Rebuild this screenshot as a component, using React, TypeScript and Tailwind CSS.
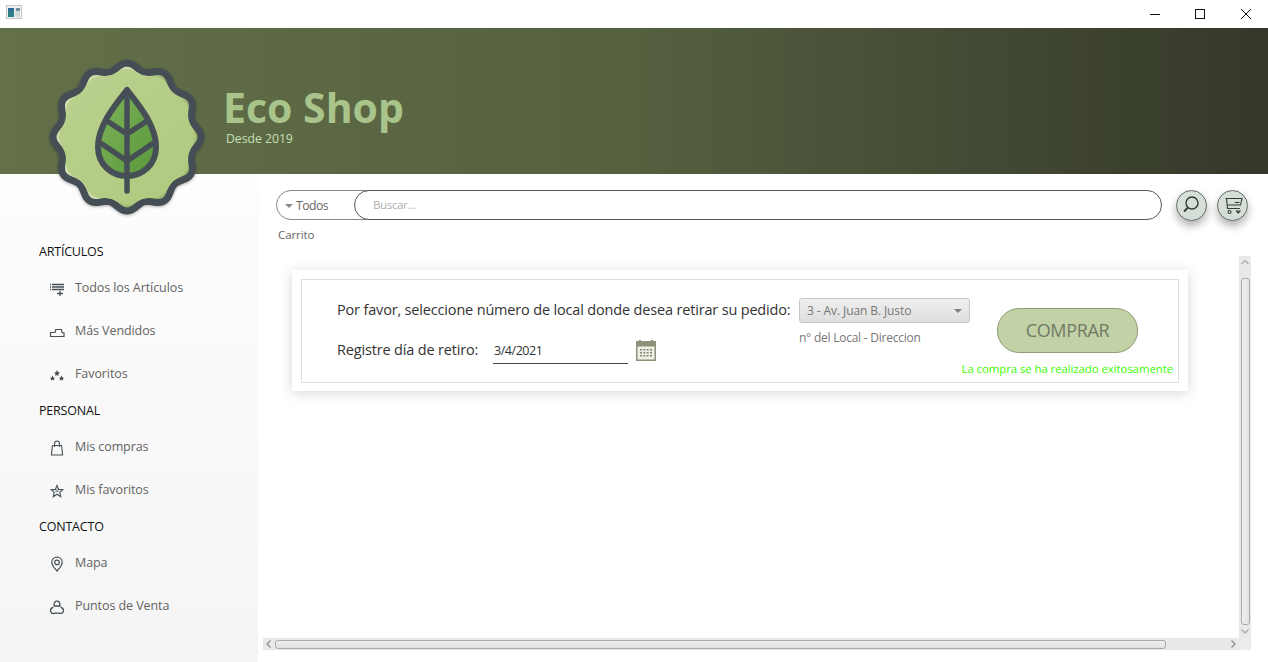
import type { ReactNode } from "react";

// scalloped badge outline, in page coordinates
function badgePath(cx: number, cy: number, r: number, amp: number, lobes: number) {
  const pts: string[] = [];
  const steps = 280;
  for (let i = 0; i < steps; i++) {
    const t = (i / steps) * Math.PI * 2;
    const rad = r + amp * Math.cos(lobes * t);
    const x = cx + rad * Math.sin(t);
    const y = cy - rad * Math.cos(t);
    pts.push(`${i === 0 ? "M" : "L"}${x.toFixed(2)} ${y.toFixed(2)}`);
  }
  return pts.join(" ") + " Z";
}

function Logo() {
  const outline = badgePath(127, 137, 70.5, 3.5, 12);
  const inner = badgePath(127, 137, 66, 2, 12);
  return (
    <svg
      viewBox="42 52 170 170"
      className="absolute left-[42px] top-[52px] h-[170px] w-[170px]"
    >
      <defs>
        <filter id="soft" x="-10%" y="-10%" width="120%" height="120%">
          <feDropShadow dx="0" dy="1" stdDeviation="1.5" floodColor="#000" floodOpacity="0.3" />
        </filter>
        <linearGradient id="leaf" x1="0" y1="0" x2="1" y2="1">
          <stop offset="0" stopColor="#7fb45a" />
          <stop offset="1" stopColor="#5a973c" />
        </linearGradient>
        <linearGradient id="badge" x1="0" y1="0" x2="1" y2="1">
          <stop offset="0" stopColor="#bbd18f" />
          <stop offset="1" stopColor="#afc97e" />
        </linearGradient>
        <linearGradient id="rim" x1="0" y1="0.3" x2="1" y2="0.7">
          <stop offset="0.5" stopColor="#cfdfb0" />
          <stop offset="0.5" stopColor="#9fb773" />
        </linearGradient>
      </defs>
      <path d={outline} fill="url(#rim)" stroke="#454e54" strokeWidth="7" strokeLinejoin="round" filter="url(#soft)" />
      <path d={inner} fill="url(#badge)" />
      <path
        d="M127 90 C116 104 98 125 98 147 C98 165 112 176 127 176 C142 176 156 165 156 147 C156 125 138 104 127 90 Z"
        fill="url(#leaf)"
        stroke="#464f55"
        strokeWidth="6"
        strokeLinejoin="round"
      />
      <path
        d="M127 90 V191 M127 134 L107 121 M127 134 L147 121 M127 161 L102 144 M127 161 L152 144"
        fill="none"
        stroke="#464f55"
        strokeWidth="5.5"
        strokeLinecap="round"
      />
    </svg>
  );
}

function TitleBar() {
  return (
    <div className="flex h-[28px] shrink-0 items-center bg-white pl-[6px]">
      <svg width="16" height="14" viewBox="0 0 16 14" className="mb-[4px]">
        <rect x="0.5" y="0.5" width="15" height="13" fill="#eef2f3" stroke="#c4c8ca" />
        <rect x="2" y="3" width="6" height="9" fill="#2c7f86" />
        <rect x="2" y="3" width="6" height="3" fill="#2d6a9a" />
        <rect x="9" y="3" width="5" height="9" fill="#d3dcd6" />
        <rect x="10" y="3" width="4" height="3" fill="#6f8f9c" />
      </svg>
      <div className="ml-auto flex h-full items-center">
        <svg width="12" height="12" viewBox="0 0 12 12" className="mr-[33px]">
          <path d="M1 6.5 H11" stroke="#111" strokeWidth="1" />
        </svg>
        <svg width="12" height="12" viewBox="0 0 12 12" className="mr-[34px]">
          <rect x="1.5" y="1.5" width="9" height="9" fill="none" stroke="#111" strokeWidth="1" />
        </svg>
        <svg width="12" height="12" viewBox="0 0 12 12" className="mr-[16px]">
          <path d="M1 1 L11 11 M11 1 L1 11" stroke="#111" strokeWidth="1" />
        </svg>
      </div>
    </div>
  );
}

function Header() {
  return (
    <header className="flex h-[146px] shrink-0 flex-col bg-gradient-to-r from-[#637049] via-[#55603f] to-[#34382a] pl-[223px] pt-[54px]">
      <h1 className="text-[41px] font-bold leading-[50px] text-[#a9c48b]">Eco Shop</h1>
      <p className="ml-[3px] mt-[-1px] text-[12.2px] leading-[16px] text-[#c6e0b4]">Desde 2019</p>
    </header>
  );
}

const iconProps = {
  width: 16,
  height: 16,
  viewBox: "0 0 16 16",
  fill: "none",
  stroke: "#454f55",
  strokeWidth: 1.1,
};

const icons: Record<string, ReactNode> = {
  list: (
    <svg {...iconProps}>
      <path d="M3 3.5 H15 M3 6 H15 M3 8.5 H15 M1 3.5 H2 M1 6 H2 M1 8.5 H2 M8 12.5 H14 M11 9.8 V15" strokeWidth="1.3" />
    </svg>
  ),
  hand: (
    <svg {...iconProps}>
      <path d="M1.5 12.5 V8.5 H6 L6.8 5.5 H12.5 L13 8.5 L15 9 V12.5 Z" strokeWidth="1.2" />
    </svg>
  ),
  stars: (
    <svg {...iconProps} fill="#454f55" stroke="none">
      <path d="M8 3 L9 5.3 L11 5.5 L9.4 7 L9.8 9 L8 8 L6.2 9 L6.6 7 L5 5.5 L7 5.3 Z" />
      <path d="M3.5 8.5 L4.4 10.5 L6 10.7 L4.9 12 L5.2 13.6 L3.5 12.8 L1.8 13.6 L2.1 12 L1 10.7 L2.6 10.5 Z" />
      <path d="M12.5 8.5 L13.4 10.5 L15 10.7 L13.9 12 L14.2 13.6 L12.5 12.8 L10.8 13.6 L11.1 12 L10 10.7 L11.6 10.5 Z" />
    </svg>
  ),
  bag: (
    <svg {...iconProps}>
      <path d="M3.4 5.5 H12.6 L13.6 15 H2.4 Z M5.6 7 V3.6 C5.6 2 6.6 1 8 1 C9.4 1 10.4 2 10.4 3.6 V7" />
    </svg>
  ),
  star: (
    <svg {...iconProps}>
      <path d="M8 2.4 L9.6 6.4 L13.8 6.7 L10.7 9.4 L11.7 13.7 L8 11.2 L4.3 13.7 L5.3 9.4 L2.2 6.7 L6.4 6.4 Z" />
      <path d="M8 5.5 L8 9.5 M6 8 L10 8" strokeWidth="0.6" />
    </svg>
  ),
  pin: (
    <svg {...iconProps}>
      <path d="M8 15 C5.5 12 2.8 9.6 2.8 6.4 C2.8 3.4 5.1 1.2 8 1.2 C10.9 1.2 13.2 3.4 13.2 6.4 C13.2 9.6 10.5 12 8 15 Z" strokeWidth="1.2" />
      <circle cx="8" cy="6.4" r="2.3" strokeWidth="1.2" />
    </svg>
  ),
  recycle: (
    <svg {...iconProps}>
      <path d="M5 7 C5 4 6.4 2.2 8 2.2 C9.6 2.2 11 4 11 7 H5" strokeWidth="1.3" />
      <path d="M4.4 8.2 C2.4 9 1.2 11 1.8 12.8 C2.4 14.4 4.4 14.8 6 14.2 H10 C11.6 14.8 13.6 14.4 14.2 12.8 C14.8 11 13.6 9 11.6 8.2" strokeWidth="1.3" />
    </svg>
  ),
};

function SectionTitle({ children }: { children: ReactNode }) {
  return (
    <div className="flex h-[30px] items-center pl-[39px] text-[12.5px] tracking-[-0.2px] text-[#111]">{children}</div>
  );
}

function NavItem({ icon, label }: { icon: string; label: string }) {
  return (
    <div className="flex h-[43px] items-center pl-[49px] text-[12.5px] tracking-[-0.08px] text-[#636363]">
      <span className="flex w-[26px] items-center">{icons[icon]}</span>
      {label}
    </div>
  );
}

function Sidebar() {
  return (
    <aside className="w-[258px] shrink-0 bg-gradient-to-b from-[#fdfdfd] to-[#f5f5f5] pt-[63px]">
      <SectionTitle>ARTÍCULOS</SectionTitle>
      <NavItem icon="list" label="Todos los Artículos" />
      <NavItem icon="hand" label="Más Vendidos" />
      <NavItem icon="stars" label="Favoritos" />
      <SectionTitle>PERSONAL</SectionTitle>
      <NavItem icon="bag" label="Mis compras" />
      <NavItem icon="star" label="Mis favoritos" />
      <SectionTitle>CONTACTO</SectionTitle>
      <NavItem icon="pin" label="Mapa" />
      <NavItem icon="recycle" label="Puntos de Venta" />
    </aside>
  );
}

function RoundButton({ children, className }: { children: ReactNode; className: string }) {
  return (
    <button
      className={`flex h-[31px] w-[31px] items-center justify-center rounded-full border border-[#66706a] bg-[#d5dfd7] shadow-[0_5px_9px_rgba(0,0,0,0.3)] ${className}`}
    >
      {children}
    </button>
  );
}

function SearchBar() {
  return (
    <div className="ml-[13px] mt-[16px] flex h-[30px] w-[972px] items-center">
      <div className="flex h-full w-[95px] shrink-0 items-center rounded-l-[15px] border border-[#888] pl-[8px] pt-[2px] text-[12.2px] tracking-[-0.5px] text-[#666]">
        <span className="mr-[3px] h-0 w-0 border-x-[4px] border-t-[4px] border-x-transparent border-t-[#888]" />
        Todos
      </div>
      <div className="z-10 ml-[-17px] flex h-full w-[808px] shrink-0 items-center rounded-[15px] border border-[#4f5a52] bg-white pl-[18px] text-[11.5px] tracking-[-0.35px] text-[#b5adad]">
        Buscar...
      </div>
      <RoundButton className="ml-[14px] shrink-0">
        <svg width="20" height="20" viewBox="0 0 20 20" fill="none" stroke="#2e3a33" strokeWidth="1.4">
          <circle cx="10" cy="8" r="6" />
          <path d="M6 12.5 L2 16.5" strokeWidth="1.8" />
        </svg>
      </RoundButton>
      <RoundButton className="ml-[10px] shrink-0">
        <svg width="22" height="22" viewBox="0 0 22 22" fill="none" stroke="#333d36" strokeWidth="1.1">
          <path d="M3.5 4.5 H20 L18.5 11 H5 M4.5 4.5 L5.5 14.5 H18" />
          <path d="M13 8.5 H17.5" />
          <circle cx="7.5" cy="18" r="1.5" />
          <path d="M14.5 17 H18 L16.2 19.2 Z" />
        </svg>
      </RoundButton>
    </div>
  );
}

function CalendarIcon() {
  return (
    <svg width="20" height="21" viewBox="0 0 20 21" className="ml-[8px] mt-[2px] shrink-0">
      <rect x="0" y="1" width="20" height="20" fill="#8a9377" />
      <rect x="1.5" y="6.5" width="17" height="13" fill="#eef0e8" />
      <rect x="3" y="0" width="2" height="3" fill="#8a9377" />
      <rect x="15" y="0" width="2" height="3" fill="#8a9377" />
      <path
        d="M4 9 h2 v1.5 h-2z M7.3 9 h2 v1.5 h-2z M10.6 9 h2 v1.5 h-2z M14 9 h2 v1.5 h-2z M4 12 h2 v1.5 h-2z M7.3 12 h2 v1.5 h-2z M10.6 12 h2 v1.5 h-2z M14 12 h2 v1.5 h-2z M4 15 h2 v1.5 h-2z M7.3 15 h2 v1.5 h-2z M10.6 15 h2 v1.5 h-2z M14 15 h2 v1.5 h-2z"
        fill="#7d8668"
      />
    </svg>
  );
}

function OrderPanel() {
  return (
    <div className="ml-[29px] mt-[14px] h-[121px] w-[896px] bg-white p-[9px] shadow-[0_2px_12px_rgba(0,0,0,0.16)]">
      <div className="flex h-[104px] border border-[#e0e0d8] pl-[35px] pt-[18px]">
        <div className="mt-[-1px] flex w-[462px] shrink-0 flex-col text-[14.5px] tracking-[-0.17px] text-[#333]">
          <div className="flex h-[25px] items-center whitespace-nowrap">
            Por favor, seleccione número de local donde desea retirar su pedido:
          </div>
          <div className="mt-[15px] flex h-[25px] items-center">
            <span className="w-[156px] shrink-0">Registre día de retiro:</span>
            <div className="mt-[1px] flex h-[27px] w-[135px] shrink-0 items-center border-b border-[#444] pl-px pt-[3px] text-[12.5px] tracking-[-0.45px] text-[#333]">
              3/4/2021
            </div>
            <CalendarIcon />
          </div>
        </div>
        <div className="w-[171px] shrink-0">
          <div className="flex h-[25px] items-center justify-between rounded-[3px] border border-[#c6c6c6] bg-gradient-to-b from-[#f0f0f0] to-[#dedede] pl-[7px] pr-[7px] text-[12px] tracking-[-0.1px] text-[#777]">
            3 - Av. Juan B. Justo
            <span className="h-0 w-0 border-x-[4.5px] border-t-[4.5px] border-x-transparent border-t-[#808080]" />
          </div>
          <div className="mt-[7px] text-[12px] leading-[16px] tracking-[-0.24px] text-[#777]">n° del Local - Direccion</div>
        </div>
        <div className="ml-[27px] flex w-[177px] shrink-0 flex-col items-start pt-[10px]">
          <button className="h-[45px] w-[141px] rounded-[22px] border border-[#909d73] bg-[#c3d1a6] text-[18px] tracking-[-0.35px] text-[#6f7a64]">
            COMPRAR
          </button>
          <div className="mt-[8px] self-end whitespace-nowrap pr-[1px] text-[11.5px] leading-[16px] tracking-[-0.12px] text-[#3dff00]">
            La compra se ha realizado exitosamente
          </div>
        </div>
      </div>
    </div>
  );
}

function VScrollbar() {
  return (
    <div className="flex w-[12px] shrink-0 flex-col items-center bg-[#e9e9e9]">
      <svg width="10" height="22" viewBox="0 0 10 22" fill="none" stroke="#a8a8a8" strokeWidth="1.2" className="shrink-0">
        <path d="M1.5 8 L5 4.5 L8.5 8" />
      </svg>
      <div className="h-[347px] w-[9px] rounded-[3px] border border-[#aaa] bg-gradient-to-r from-[#f0f0f0] to-[#e2e2e2]" />
      <svg width="10" height="13" viewBox="0 0 10 13" fill="none" stroke="#a8a8a8" strokeWidth="1.2" className="shrink-0">
        <path d="M1.5 4.5 L5 8 L8.5 4.5" />
      </svg>
    </div>
  );
}

function HScrollbar() {
  return (
    <div className="flex h-[12px] shrink-0">
      <div className="flex flex-1 items-center bg-[#e9e9e9]">
        <svg width="12" height="12" viewBox="0 0 12 12" fill="none" stroke="#8c8c8c" strokeWidth="1.2" className="shrink-0">
          <path d="M7.5 2.5 L4 6 L7.5 9.5" />
        </svg>
        <div className="h-[9px] w-[891px] rounded-[3px] border border-[#aaa] bg-gradient-to-b from-[#f0f0f0] to-[#e0e0e0]" />
        <svg width="12" height="12" viewBox="0 0 12 12" fill="none" stroke="#8c8c8c" strokeWidth="1.2" className="ml-auto shrink-0">
          <path d="M4.5 2.5 L8 6 L4.5 9.5" />
        </svg>
      </div>
      <div className="w-[12px] bg-[#ececec]" />
    </div>
  );
}

export default function App() {
  return (
    <div
      className="relative flex h-[662px] w-[1268px] flex-col overflow-hidden bg-white"
      style={{ fontFamily: '"Open Sans", "Noto Sans", sans-serif' }}
    >
      <TitleBar />
      <Header />
      <div className="flex min-h-0 flex-1">
        <Sidebar />
        <main className="flex min-w-0 flex-1 flex-col pb-[12px] pl-[5px] pr-[17px]">
          <SearchBar />
          <div className="ml-[15px] mt-[7px] text-[11.5px] leading-[16px] tracking-[-0.1px] text-[#666]">Carrito</div>
          <div className="mt-[13px] flex min-h-0 flex-1">
            <div className="min-w-0 flex-1">
              <OrderPanel />
            </div>
            <VScrollbar />
          </div>
          <HScrollbar />
        </main>
      </div>
      <Logo />
    </div>
  );
}
